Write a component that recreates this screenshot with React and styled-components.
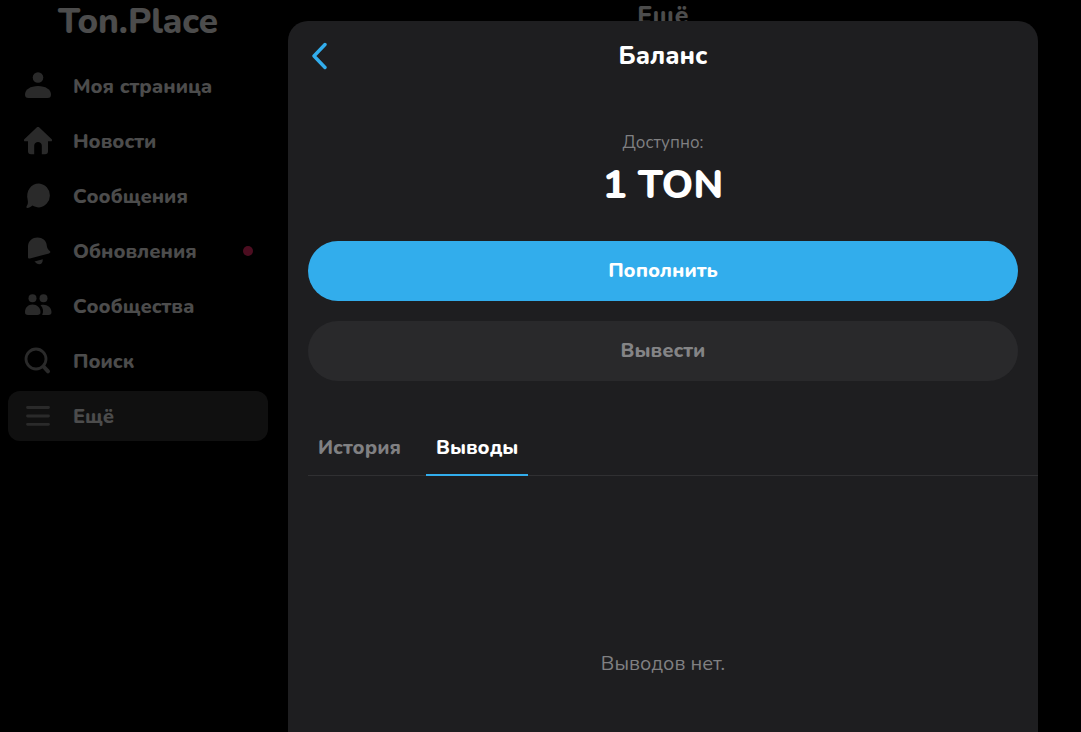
import React from 'react';
import { useState } from 'react';
import styled, { createGlobalStyle } from 'styled-components';

const menu = [
  { id: 'profile', label: 'Моя страница' },
  { id: 'news', label: 'Новости' },
  { id: 'messages', label: 'Сообщения' },
  { id: 'updates', label: 'Обновления', unread: true },
  { id: 'groups', label: 'Сообщества' },
  { id: 'search', label: 'Поиск' },
  { id: 'more', label: 'Ещё' },
];

const tabs = ['История', 'Выводы'];

const icons = {
  profile: (
    <>
      <circle cx="14" cy="5.5" r="5.3" />
      <path d="M14 14C6.5 14 1 17.500 1 22.500C1 25 2 26 4.500 26H23.500C26 26 27 25 27 22.500C27 17.500 21.500 14 14 14Z" />
    </>
  ),
  news: (
    <path d="M13.200 .1a1.200 1.200 0 0 1 1.600 0L27.700 12.200c.8.900.400 2-.8 2H24v10c0 2-1 3-3 3h-3.200v-8.500c0-5-7.600-5-7.600 0V27.200H7c-2 0-3-1-3-3V14.200H1.100C-.1 14.200-.5 13.100.3 12.200Z" />
  ),
  messages: (
    <path d="M15 1.500A12 12 0 0 1 15 25.400C12.500 25.400 10.300 24.700 8.500 23.600C6.500 25.200 4.500 26.200 3.200 26C2.200 25.800 2.200 24.800 2.900 23.800C4 22 4.100 20.500 3.700 18C1.500 9 7 1.500 15 1.500Z" />
  ),
  updates: (
    <>
      <path d="M4 9C4.500 3.500 8.500.5 13.500.5S22 3.500 22.600 7.500C23.200 11 23.300 11.500 25.800 14C26.800 15.100 26.300 16 25 16.400L6 21.500C4.600 21.800 3.800 21.200 4 19.800Z" />
      <path d="M10.500 24.500L18.800 22.300C18.800 25.500 17.500 27.300 15.200 27.300C13.500 27.300 12 26 10.500 24.500Z" />
    </>
  ),
  groups: (
    <>
      <circle cx="8.500" cy="6.200" r="4" />
      <circle cx="19.500" cy="6.200" r="4" />
      <path d="M8.500 12.500C4 12.500 1 15.800 1 20C1 22.300 1.800 23 4 23H13.200C15.400 23 16.500 22.300 16.500 20C16.500 15.800 13 12.500 8.500 12.500Z" />
      <path d="M16.500 13.300C21.800 11.500 27.500 15 27.500 20C27.500 22.300 26.500 23 24.500 23H18.200C19.800 19.500 19.200 15.900 16.500 13.300Z" />
    </>
  ),
  search: (
    <g fill="none" stroke="currentColor" strokeLinecap="round">
      <circle cx="12" cy="12" r="10" strokeWidth="2.800" />
      <path d="M19.500 19.500L24 24.300" strokeWidth="4" />
    </g>
  ),
  more: (
    <g fill="none" stroke="currentColor" strokeLinecap="round" strokeWidth="2.800">
      <path d="M3.500 5.500H24.500M3.500 14H24.500M3.500 22.300H24.500" />
    </g>
  ),
};

function App() {
  const [activetab, setActivetab] = useState('Выводы');

  return (
    <React.Fragment>
      <GlobalStyle />
      <Page>
        <Sidebar>
          <Logo href="#">Ton.Place</Logo>
          <Nav>
            {menu.map((item) => (
              <NavLink href={`#${item.id}`} key={item.id} $active={item.id === 'more'}>
                <NavIcon viewBox="0 0 28 28" aria-hidden="true">
                  {icons[item.id]}
                </NavIcon>
                <NavLabel>{item.label}</NavLabel>
                {item.unread && <Dot />}
              </NavLink>
            ))}
          </Nav>
        </Sidebar>
        <Main>
          <PageTitle>Ещё</PageTitle>
        </Main>
      </Page>

      <Overlay>
        <Modal role="dialog" aria-labelledby="modal-title">
          <ModalHeader>
            <BackButton type="button" aria-label="Назад">
              <svg width="16" height="28" viewBox="0 0 16 28" aria-hidden="true">
                <path
                  d="M14 2.500L3 14L14 25.500"
                  fill="none"
                  stroke="currentColor"
                  strokeWidth="3.400"
                  strokeLinecap="round"
                  strokeLinejoin="round"
                />
              </svg>
            </BackButton>
            <ModalTitle id="modal-title">Баланс</ModalTitle>
          </ModalHeader>

          <Balance>
            <BalanceLabel>Доступно:</BalanceLabel>
            <BalanceValue>1 TON</BalanceValue>
          </Balance>

          <Actions>
            <Button type="button" $primary>Пополнить</Button>
            <Button type="button">Вывести</Button>
          </Actions>

          <Tabs role="tablist">
            {tabs.map((tab) => (
              <Tab
                type="button"
                role="tab"
                key={tab}
                aria-selected={activetab === tab}
                $active={activetab === tab}
                onClick={() => setActivetab(tab)}
              >
                {tab}
              </Tab>
            ))}
          </Tabs>

          <Empty>Выводов нет.</Empty>
        </Modal>
      </Overlay>
    </React.Fragment>
  );
}

export default App;

const GlobalStyle = createGlobalStyle`
* {
  box-sizing: border-box;
}
body {
  margin: 0;
  background: #000;
  color: #fff;
  font-family: Nunito, 'Open Sans', 'Noto Sans', sans-serif;
}
button {
  border: 0;
  padding: 0;
  background: none;
  font-family: inherit;
  cursor: pointer;
}
`;

const Page = styled.div`
  display: grid;
  grid-template-columns: 260px 1fr;
  column-gap: 20px;
  min-height: 100vh;
  padding: 0 43px 0 8px;
`;

const Sidebar = styled.aside`
  display: flex;
  flex-direction: column;
`;

const Logo = styled.a`
  height: 61px;
  line-height: 44px;
  text-align: center;
  font-size: 35px;
  font-weight: 800;
  color: #fff;
  text-decoration: none;
`;

const Nav = styled.nav`
  display: flex;
  flex-direction: column;
  gap: 5px;
`;

const NavLink = styled.a`
  display: flex;
  align-items: center;
  height: 50px;
  padding: 0 15px 0 16px;
  border-radius: 12px;
  background: ${(p) => (p.$active ? '#363636' : 'transparent')};
  color: #fff;
  text-decoration: none;
`;

const NavIcon = styled.svg`
  width: 28px;
  height: 28px;
  margin-right: 21px;
  color: #8c8c8c;
  fill: currentColor;
`;

const NavLabel = styled.span`
  flex: 1;
  padding-top: 2px;
  font-size: 20px;
  line-height: 28px;
  font-weight: 800;
`;

const Dot = styled.span`
  width: 10px;
  height: 10px;
  border-radius: 50%;
  background: #ff2d6b;
`;

const Main = styled.main`
  text-align: center;
`;

const PageTitle = styled.h1`
  margin: 0;
  font-size: 25px;
  line-height: 32px;
  font-weight: 800;
`;

const Overlay = styled.div`
  position: fixed;
  inset: 0;
  display: flex;
  padding: 21px 43px 0 288px;
  background: rgba(0, 0, 0, 0.7);
`;

const Modal = styled.section`
  flex: 1;
  border-radius: 20px 20px 0 0;
  background: #1e1e20;
  overflow: hidden;
`;

const ModalHeader = styled.header`
  display: grid;
  grid-template-columns: 60px 1fr 60px;
  align-items: center;
  height: 70px;
`;

const BackButton = styled.button`
  display: flex;
  align-items: center;
  height: 70px;
  padding-left: 23px;
  color: #32adec;
`;

const ModalTitle = styled.h2`
  margin: 0;
  text-align: center;
  font-size: 25px;
  line-height: 32px;
  font-weight: 800;
`;

const Balance = styled.div`
  display: flex;
  flex-direction: column;
  align-items: center;
  padding: 40px 20px 28px;
`;

const BalanceLabel = styled.span`
  font-size: 17px;
  line-height: 24px;
  color: #808082;
`;

const BalanceValue = styled.strong`
  margin-top: 2px;
  font-size: 40px;
  line-height: 56px;
  font-weight: 800;
`;

const Actions = styled.div`
  display: flex;
  flex-direction: column;
  gap: 20px;
  padding: 0 20px;
`;

const Button = styled.button`
  height: 60px;
  border-radius: 30px;
  background: ${(p) => (p.$primary ? '#32adec' : '#29292b')};
  color: ${(p) => (p.$primary ? '#fff' : '#848486')};
  font-size: 20px;
  line-height: 28px;
  font-weight: 800;
`;

const Tabs = styled.div`
  display: flex;
  gap: 15px;
  margin: 40px 0 0 20px;
  box-shadow: inset 0 -1px #303032;
`;

const Tab = styled.button`
  height: 55px;
  padding: 0 10px;
  border-bottom: 2px solid ${(p) => (p.$active ? '#32adec' : 'transparent')};
  color: ${(p) => (p.$active ? '#fff' : '#808082')};
  font-size: 20px;
  line-height: 28px;
  font-weight: 800;
`;

const Empty = styled.p`
  margin: 0;
  padding: 174px 20px;
  text-align: center;
  font-size: 20px;
  line-height: 28px;
  color: #808082;
`;
